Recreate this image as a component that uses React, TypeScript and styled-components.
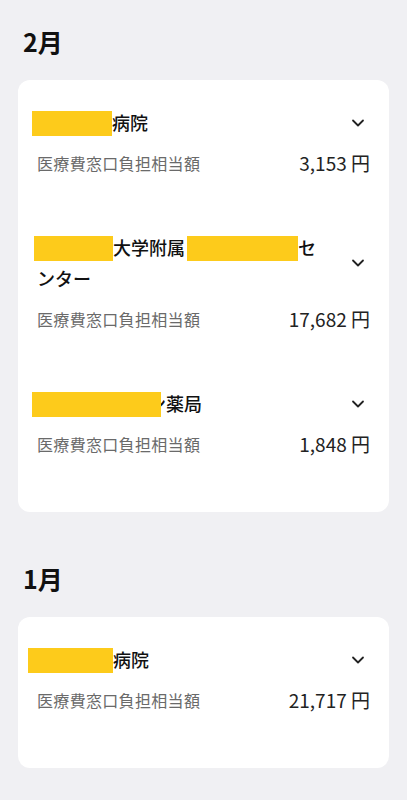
import styled, { createGlobalStyle } from 'styled-components';

const GlobalStyle = createGlobalStyle`
  html, body {
    margin: 0;
    padding: 0;
    background: #f0f0f3;
  }
  body {
    font-family: "Noto Sans CJK JP", "Noto Sans", sans-serif;
    color: #111;
  }
`;

const Page = styled.div`
  padding: 24px 18px 32px;
`;

const Section = styled.section`
  & + & {
    margin-top: 49px;
  }
`;

const MonthTitle = styled.h2`
  margin: 0 0 22px 5px;
  font-size: 25px;
  line-height: 34px;
  font-weight: 700;
  color: #111;
`;

const Card = styled.div`
  background: #fff;
  border-radius: 12px;
  padding: 27px 19px 56px;
  display: flex;
  flex-direction: column;
  gap: 57px;
`;

const Item = styled.div`
  display: flex;
  flex-direction: column;
  gap: 13px;
`;

const ItemHeader = styled.div`
  display: flex;
  align-items: center;
  justify-content: space-between;
`;

const ItemTitle = styled.div`
  width: 286px;
  font-size: 18px;
  line-height: 31px;
  font-weight: 500;
  color: #111;
`;

const Redacted = styled.span<{ w: number; shift?: number }>`
  position: relative;
  z-index: 1;
  display: inline-block;
  width: ${p => p.w}px;
  height: 25px;
  margin-left: ${p => p.shift ?? 0}px;
  background: #fdcb1b;
  vertical-align: -6px;
`;

const HiddenTail = styled.span`
  margin-left: -13px;
`;

const Chevron = styled.svg`
  width: 14px;
  height: 14px;
  margin-right: 5px;
  flex: none;
`;

const DetailRow = styled.div`
  display: flex;
  align-items: center;
  justify-content: space-between;
`;

const Label = styled.span`
  font-size: 16px;
  line-height: 24px;
  color: #6a6a6a;
  letter-spacing: 0.02em;
`;

const Amount = styled.span`
  font-size: 19px;
  line-height: 24px;
  color: #222;
`;

const ChevronIcon = () => (
  <Chevron viewBox="0 0 14 14" fill="none">
    <path d="M2 4.5L7 9.5L12 4.5" stroke="#222" strokeWidth="1.8" strokeLinecap="round" strokeLinejoin="round" />
  </Chevron>
);

type Entry = { title: React.ReactNode; amount: string };

const months: { month: string; entries: Entry[] }[] = [
  {
    month: '2月',
    entries: [
      { title: <><Redacted w={80} shift={-5} />病院</>, amount: '3,153 円' },
      { title: <><Redacted w={79} shift={-3} />大学附属<Redacted w={111} shift={2} />セ<br />ンター</>, amount: '17,682 円' },
      { title: <><Redacted w={129} shift={-5} /><HiddenTail>ン</HiddenTail>薬局</>, amount: '1,848 円' },
    ],
  },
  {
    month: '1月',
    entries: [
      { title: <><Redacted w={85} shift={-9} />病院</>, amount: '21,717 円' },
    ],
  },
];

export default function App() {
  return (
    <>
      <GlobalStyle />
      <Page>
        {months.map(m => (
          <Section key={m.month}>
            <MonthTitle>{m.month}</MonthTitle>
            <Card>
              {m.entries.map((e, i) => (
                <Item key={i}>
                  <ItemHeader>
                    <ItemTitle>{e.title}</ItemTitle>
                    <ChevronIcon />
                  </ItemHeader>
                  <DetailRow>
                    <Label>医療費窓口負担相当額</Label>
                    <Amount>{e.amount}</Amount>
                  </DetailRow>
                </Item>
              ))}
            </Card>
          </Section>
        ))}
      </Page>
    </>
  );
}
